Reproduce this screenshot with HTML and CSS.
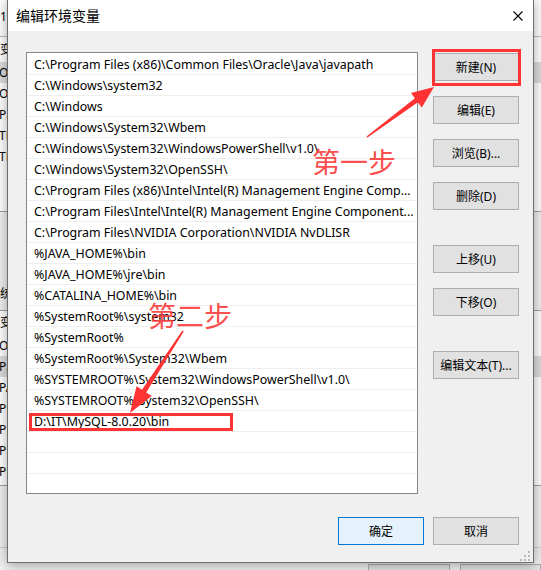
FILE: index.html
```html
<!DOCTYPE html>
<html lang="zh-CN">
<head>
<meta charset="utf-8">
<title>编辑环境变量</title>
<link rel="stylesheet" href="styles.css">
</head>
<body>
<div class="desk">
  <div class="bgwin">
    <div class="bg-head">17</div>
    <div class="bg-list bg-list1">
      <div class="bg-hdr">变</div>
      <div class="bg-row sel">On</div>
      <div class="bg-row">On</div>
      <div class="bg-row">Pa</div>
      <div class="bg-row">TE</div>
      <div class="bg-row">TM</div>
    </div>
    <div class="bg-mid"><div class="bg-label">统</div></div>
    <div class="bg-list bg-list2">
      <div class="bg-hdr">变</div>
      <div class="bg-row">OS</div>
      <div class="bg-row sel">Pa</div>
      <div class="bg-row">PA</div>
      <div class="bg-row">PR</div>
      <div class="bg-row">PR</div>
      <div class="bg-row">PR</div>
      <div class="bg-row">PR</div>
    </div>
    <div class="bg-sep"></div>
    <div class="bg-foot"><span class="bg-btn"></span><span class="bg-btn"></span></div>
  </div>

  <div class="dialog">
    <div class="titlebar">
      <span class="title">编辑环境变量</span>
      <svg class="close" width="10" height="10" viewBox="0 0 10 10"><path d="M0.5 0.5 L9.5 9.5 M9.5 0.5 L0.5 9.5" stroke="#000" stroke-width="1.1" fill="none"/></svg>
    </div>
    <div class="body">
      <div class="main">
        <div class="list">
          <div class="row">C:\Program Files (x86)\Common Files\Oracle\Java\javapath</div>
          <div class="row">C:\Windows\system32</div>
          <div class="row">C:\Windows</div>
          <div class="row">C:\Windows\System32\Wbem</div>
          <div class="row">C:\Windows\System32\WindowsPowerShell\v1.0\</div>
          <div class="row">C:\Windows\System32\OpenSSH\</div>
          <div class="row">C:\Program Files (x86)\Intel\Intel(R) Management Engine Comp...</div>
          <div class="row">C:\Program Files\Intel\Intel(R) Management Engine Component...</div>
          <div class="row">C:\Program Files\NVIDIA Corporation\NVIDIA NvDLISR</div>
          <div class="row">%JAVA_HOME%\bin</div>
          <div class="row">%JAVA_HOME%\jre\bin</div>
          <div class="row">%CATALINA_HOME%\bin</div>
          <div class="row">%SystemRoot%\system32</div>
          <div class="row">%SystemRoot%</div>
          <div class="row">%SystemRoot%\System32\Wbem</div>
          <div class="row">%SYSTEMROOT%\System32\WindowsPowerShell\v1.0\</div>
          <div class="row">%SYSTEMROOT%\System32\OpenSSH\</div>
          <div class="row">D:\IT\MySQL-8.0.20\bin</div>
          <div class="row"></div>
          <div class="row"></div>
          <div class="row"></div>
        </div>
        <div class="btns">
          <button class="btn">新建(N)</button>
          <button class="btn">编辑(E)</button>
          <button class="btn">浏览(B)...</button>
          <button class="btn">删除(D)</button>
          <button class="btn sp">上移(U)</button>
          <button class="btn">下移(O)</button>
          <button class="btn sp">编辑文本(T)...</button>
        </div>
      </div>
      <div class="foot">
        <button class="btn ok">确定</button>
        <button class="btn">取消</button>
      </div>
    </div>
    <svg class="grip" width="12" height="12" viewBox="0 0 12 12" fill="#b9b9b9">
      <rect x="10" y="2" width="2" height="2"/>
      <rect x="6" y="6" width="2" height="2"/><rect x="10" y="6" width="2" height="2"/>
      <rect x="2" y="10" width="2" height="2"/><rect x="6" y="10" width="2" height="2"/><rect x="10" y="10" width="2" height="2"/>
    </svg>
  </div>

  <div class="mark mark-new"></div>
  <div class="mark mark-row"></div>
  <span class="note note1">第一步</span>
  <span class="note note2">第二步</span>
  <svg class="arrows" width="541" height="570" viewBox="0 0 541 570">
    <polygon fill="#f33" points="367.5,137.6 417.9,102.2 421.8,107.4 434,87 411,93 414.9,98.2 366.5,136.4"/>
    <polygon fill="#f33" points="183.7,331.4 146.2,392.6 151.7,396.1 130,413 136.5,386.3 142,389.8 182.3,330.6"/>
  </svg>
</div>
</body>
</html>
```

FILE: styles.css
```css
html, body {
  margin: 0;
  padding: 0;
}
body {
  width: 541px;
  height: 570px;
  overflow: hidden;
  font-family: "Noto Sans", "Noto Sans CJK SC", sans-serif;
  font-size: 12px;
  color: #000;
}
.desk {
  position: relative;
  width: 541px;
  height: 570px;
  overflow: hidden;
  background: #f0f0f0;
}

/* background window */
.bgwin {
  width: 541px;
}
.bg-head {
  height: 36px;
  line-height: 34px;
  background: #fff;
  border-bottom: 1px solid #bcbcbc;
  white-space: nowrap;
}
.bg-list {
  background: #fff;
  white-space: nowrap;
}
.bg-list1 {
  height: 174px;
  border-bottom: 1px solid #a0a0a0;
}
.bg-hdr {
  height: 25px;
  line-height: 25px;
}
.bg-list2 .bg-hdr {
  height: 24px;
  line-height: 24px;
}
.bg-row {
  height: 21px;
  line-height: 21px;
  text-indent: -1px;
}
.bg-row.sel {
  background: #dcdcdc;
}
.bg-mid {
  height: 98px;
  padding-top: 72px;
  box-sizing: border-box;
}
.bg-label {
  line-height: 20px;
  white-space: nowrap;
}
.bg-list2 {
  height: 174px;
  border-top: 1px solid #a0a0a0;
  border-bottom: 1px solid #a0a0a0;
}
.bg-sep {
  height: 61px;
  border-bottom: 1px solid #d0d0d0;
}
.bg-foot {
  display: flex;
  gap: 10px;
  padding-left: 368px;
  margin-top: 16px;
}
.bg-btn {
  width: 85px;
  height: 28px;
  box-sizing: border-box;
  border: 1px solid #adadad;
  background: #e1e1e1;
}

/* dialog */
.dialog {
  position: absolute;
  left: 7px;
  top: -1px;
  width: 527px;
  height: 564px;
  box-sizing: border-box;
  border: 1px solid #6e6e6e;
  background: #f0f0f0;
  box-shadow: 0 2px 12px rgba(0, 0, 0, 0.35);
  display: flex;
  flex-direction: column;
}
.titlebar {
  height: 31px;
  flex: none;
  background: #fff;
  display: flex;
  align-items: center;
  justify-content: space-between;
  padding: 0 10px 0 8px;
}
.title {
  font-size: 14px;
  line-height: 20px;
}
.close {
  display: block;
}
.body {
  flex: 1;
  display: flex;
  flex-direction: column;
}
.main {
  display: flex;
  gap: 15px;
  padding: 21px 14px 0 18px;
}
.list {
  width: 392px;
  height: 442px;
  flex: none;
  box-sizing: border-box;
  border: 1px solid #828790;
  background: #fff;
  overflow: hidden;
  padding-top: 1px;
}
.row {
  height: 21px;
  box-sizing: border-box;
  border-bottom: 1px solid #efefef;
  padding-left: 7px;
  line-height: 21px;
  font-size: 12.4px;
  white-space: nowrap;
  overflow: hidden;
}
.btns {
  display: flex;
  flex-direction: column;
  gap: 15px;
  width: 86px;
  padding-top: 1px;
}
.btn {
  width: 86px;
  height: 28px;
  flex: none;
  box-sizing: border-box;
  border: 1px solid #adadad;
  background: #e1e1e1;
  font-family: inherit;
  font-size: 12px;
  color: #000;
  padding: 0;
  margin: 0;
}
.btn.sp {
  margin-top: 20px;
}
.btn.ok {
  border-color: #0078d7;
  background: #e5f1fb;
}
.foot {
  display: flex;
  justify-content: flex-end;
  gap: 9px;
  padding-right: 14px;
  margin-top: 23px;
}
.grip {
  position: absolute;
  right: 3px;
  bottom: 1px;
}

/* annotations */
.mark {
  position: absolute;
  box-sizing: border-box;
  border: 3px solid #f33;
}
.mark-new {
  left: 432px;
  top: 49px;
  width: 89px;
  height: 37px;
}
.mark-row {
  left: 29px;
  top: 413px;
  width: 204px;
  height: 18px;
}
.note {
  position: absolute;
  font-family: "Noto Sans CJK SC", sans-serif;
  font-size: 28px;
  line-height: 28px;
  color: rgba(250, 55, 55, 0.9);
  white-space: nowrap;
}
.note1 {
  left: 312px;
  top: 147px;
}
.note2 {
  left: 148px;
  top: 301px;
}
.arrows {
  position: absolute;
  left: 0;
  top: 0;
  pointer-events: none;
}
```
